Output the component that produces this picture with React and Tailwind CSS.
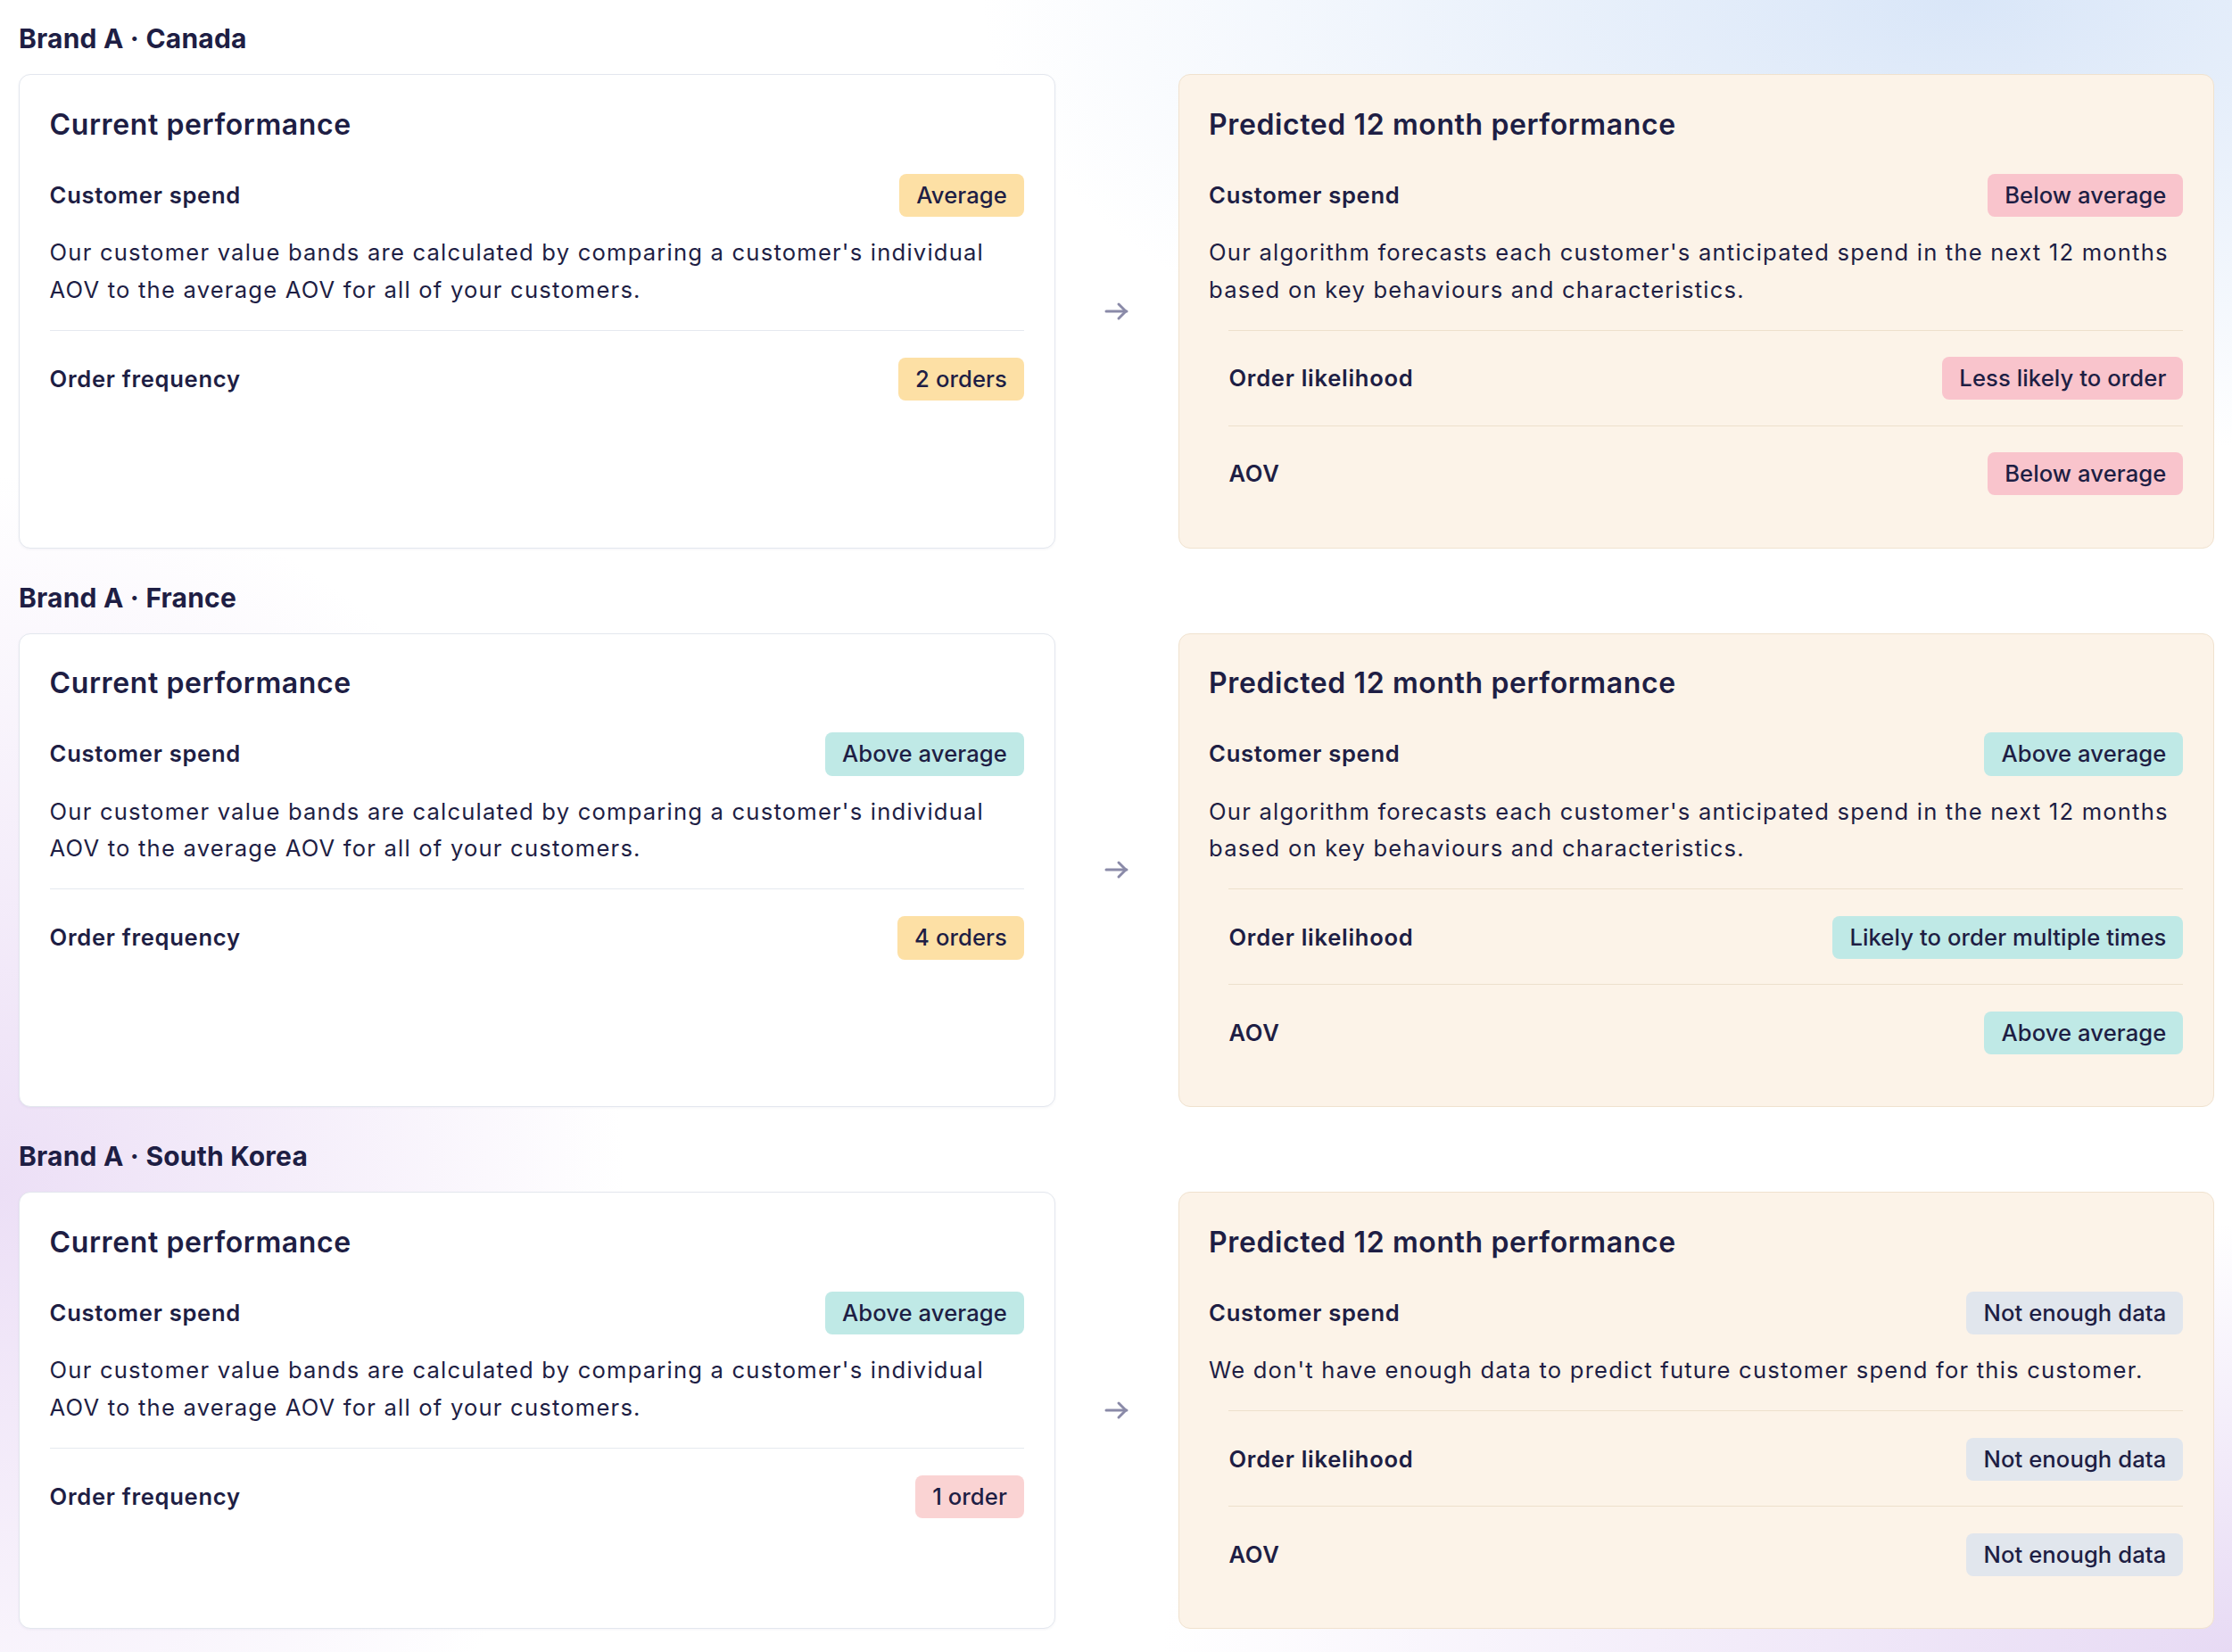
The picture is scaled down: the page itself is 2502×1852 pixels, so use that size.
import React from 'react';

const tones = {
    amber: 'bg-[#fde0a5]',
    pink: 'bg-[#f9c4cc]',
    teal: 'bg-[#bfe9e6]',
    rose: 'bg-[#fad3d3]',
    gray: 'bg-[#e1e6ed]',
};

const currentText = "Our customer value bands are calculated by comparing a customer's individual AOV to the average AOV for all of your customers.";
const predictText = "Our algorithm forecasts each customer's anticipated spend in the next 12 months based on key behaviours and characteristics.";
const noDataText = "We don't have enough data to predict future customer spend for this customer.";

const sections = [
    {
        name: 'Brand A · Canada',
        spend: ['Average', 'amber'],
        freq: ['2 orders', 'amber'],
        predSpend: ['Below average', 'pink'],
        predText: predictText,
        likelihood: ['Less likely to order', 'pink'],
        aov: ['Below average', 'pink'],
    },
    {
        name: 'Brand A · France',
        spend: ['Above average', 'teal'],
        freq: ['4 orders', 'amber'],
        predSpend: ['Above average', 'teal'],
        predText: predictText,
        likelihood: ['Likely to order multiple times', 'teal'],
        aov: ['Above average', 'teal'],
    },
    {
        name: 'Brand A · South Korea',
        spend: ['Above average', 'teal'],
        freq: ['1 order', 'rose'],
        predSpend: ['Not enough data', 'gray'],
        predText: noDataText,
        likelihood: ['Not enough data', 'gray'],
        aov: ['Not enough data', 'gray'],
    },
];

function Badge({ item }) {
    const [label, tone] = item;
    return (
        <span className={`${tones[tone]} rounded-[8px] px-[19px] py-[5px] text-[25.6px] leading-[38.4px] font-medium tracking-[0.1px] whitespace-nowrap`}>
            {label}
        </span>
    );
}

function Row({ label, item, className }) {
    return (
        <div className={`flex items-center justify-between ${className}`}>
            <span className="text-[25.6px] leading-[38.4px] font-semibold tracking-[0.7px]">{label}</span>
            <Badge item={item} />
        </div>
    );
}

function Arrow() {
    return (
        <div className="flex items-center justify-center">
            <svg width="28" height="22" viewBox="0 0 28 22" fill="none" stroke="#8a8aa8" strokeWidth="3" strokeLinecap="round" strokeLinejoin="round">
                <path d="M2 11h23" />
                <path d="M16 3l8 8-8 8" />
            </svg>
        </div>
    );
}

function Section({ s }) {
    return (
        <section>
            <h2 className="text-[30px] leading-[40px] font-bold tracking-[0.2px] mb-[20px]">{s.name}</h2>
            <div className="grid grid-cols-[1fr_138px_1fr]">
                <div className="rounded-[13px] border-[1.6px] border-[#e3e7ee] bg-white px-[33.6px] pt-[33.6px] pb-[30px] shadow-[0_1px_3px_rgba(40,40,90,0.05)]">
                    <h3 className="text-[32px] leading-[43px] font-semibold tracking-[0.6px]">Current performance</h3>
                    <Row label="Customer spend" item={s.spend} className="mt-[34px]" />
                    <p className="mt-[19px] text-[25.6px] leading-[41.6px] tracking-[1.2px]">{currentText}</p>
                    <Row label="Order frequency" item={s.freq} className="mt-[24.5px] border-t-[1.6px] border-[#e5e9ef] pt-[30px]" />
                </div>
                <Arrow />
                <div className="rounded-[13px] border-[1.6px] border-[#f0e2cf] bg-[#fcf3e8] px-[33.6px] pt-[33.6px] pb-[30px]">
                    <h3 className="text-[32px] leading-[43px] font-semibold tracking-[0.6px]">Predicted 12 month performance</h3>
                    <Row label="Customer spend" item={s.predSpend} className="mt-[34px]" />
                    <p className="mt-[19px] text-[25.6px] leading-[41.6px] tracking-[1.2px]">{s.predText}</p>
                    <div className="mt-[24.5px] ml-[22.4px]">
                        <Row label="Order likelihood" item={s.likelihood} className="border-t-[1.6px] border-[#ede0cc] pt-[29.2px] pb-[28.4px]" />
                        <Row label="AOV" item={s.aov} className="border-t-[1.6px] border-[#ede0cc] pt-[29.2px] pb-[28.4px]" />
                    </div>
                </div>
            </div>
        </section>
    );
}

export default function App() {
    return (
        <div className="min-h-screen bg-white bg-[radial-gradient(ellipse_1100px_520px_at_88%_0%,#d9e6f8_0%,rgba(217,230,248,0)_100%),radial-gradient(ellipse_700px_800px_at_0%_72%,#ecdff6_0%,rgba(236,223,246,0)_100%),radial-gradient(ellipse_1200px_480px_at_100%_100%,#e7daf4_0%,rgba(231,218,244,0)_100%)] font-['Inter',sans-serif] text-[#1e1e44]">
            <div className="flex flex-col gap-[35px] pt-[23px] pb-[24px] pl-[21px] pr-[20px]">
                {sections.map(s => (
                    <Section key={s.name} s={s} />
                ))}
            </div>
        </div>
    );
}
